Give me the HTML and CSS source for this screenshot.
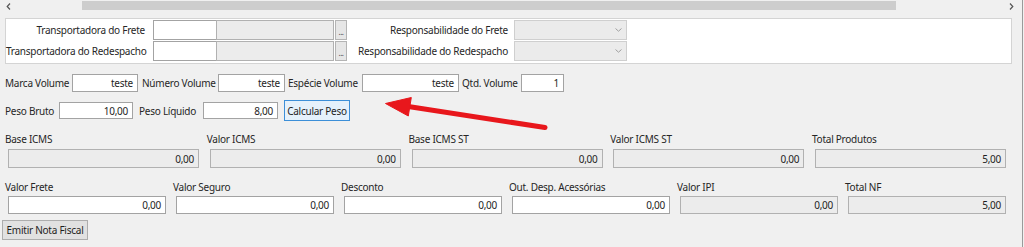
FILE: index.html
```html
<!DOCTYPE html>
<html lang="pt-BR">
<head>
<meta charset="utf-8">
<title>Nota Fiscal</title>
<link rel="stylesheet" href="styles.css">
</head>
<body>
<div class="frame">
  <div class="hscroll">
    <span class="sarrow"><svg width="5" height="7" viewBox="0 0 5 7"><path d="M4 0.5 L1.2 3.5 L4 6.5" fill="none" stroke="#555" stroke-width="1.2"/></svg></span>
    <div class="thumb"></div>
    <span class="sarrow right"><svg width="5" height="7" viewBox="0 0 5 7"><path d="M1 0.5 L3.8 3.5 L1 6.5" fill="none" stroke="#555" stroke-width="1.2"/></svg></span>
  </div>

  <div class="panel">
    <div class="prow">
      <span class="plabel">Transportadora do Frete</span>
      <span class="field code"></span>
      <span class="field ro name"></span>
      <span class="dots">...</span>
      <span class="plabel2">Responsabilidade do Frete</span>
      <span class="combo"><svg width="7" height="4" viewBox="0 0 7 4"><path d="M0.5 0.5 L3.5 3.2 L6.5 0.5" fill="none" stroke="#a0a0a0" stroke-width="1"/></svg></span>
    </div>
    <div class="prow">
      <span class="plabel">Transportadora do Redespacho</span>
      <span class="field code"></span>
      <span class="field ro name"></span>
      <span class="dots">...</span>
      <span class="plabel2">Responsabilidade do Redespacho</span>
      <span class="combo"><svg width="7" height="4" viewBox="0 0 7 4"><path d="M0.5 0.5 L3.5 3.2 L6.5 0.5" fill="none" stroke="#a0a0a0" stroke-width="1"/></svg></span>
    </div>
  </div>

  <div class="vrow">
    <span class="lbl l-marca">Marca Volume</span>
    <span class="field w-marca">teste</span>
    <span class="lbl l-numero">Número Volume</span>
    <span class="field w-numero">teste</span>
    <span class="lbl l-especie">Espécie Volume</span>
    <span class="field w-especie">teste</span>
    <span class="lbl l-qtd">Qtd. Volume</span>
    <span class="field w-qtd">1</span>
  </div>

  <div class="wrow">
    <span class="lbl l-bruto">Peso Bruto</span>
    <span class="field w-bruto">10,00</span>
    <span class="lbl l-liquido">Peso Líquido</span>
    <span class="field w-liquido">8,00</span>
    <span class="btn focus">Calcular Peso</span>
  </div>

  <div class="grid5">
    <div class="cell"><span class="clabel">Base ICMS</span><span class="field ro tall">0,00</span></div>
    <div class="cell"><span class="clabel">Valor ICMS</span><span class="field ro tall">0,00</span></div>
    <div class="cell"><span class="clabel">Base ICMS ST</span><span class="field ro tall">0,00</span></div>
    <div class="cell"><span class="clabel">Valor ICMS ST</span><span class="field ro tall">0,00</span></div>
    <div class="cell"><span class="clabel">Total Produtos</span><span class="field ro tall">5,00</span></div>
  </div>

  <div class="grid6">
    <div class="cell"><span class="clabel">Valor Frete</span><span class="field tall">0,00</span></div>
    <div class="cell"><span class="clabel">Valor Seguro</span><span class="field tall">0,00</span></div>
    <div class="cell"><span class="clabel">Desconto</span><span class="field tall">0,00</span></div>
    <div class="cell"><span class="clabel">Out. Desp. Acessórias</span><span class="field tall">0,00</span></div>
    <div class="cell"><span class="clabel">Valor IPI</span><span class="field ro tall">0,00</span></div>
    <div class="cell"><span class="clabel">Total NF</span><span class="field ro tall">5,00</span></div>
  </div>

  <div class="actions">
    <span class="btn emit">Emitir Nota Fiscal</span>
  </div>

  <svg class="arrow" width="1024" height="247" viewBox="0 0 1024 247">
    <line x1="405" y1="106" x2="545" y2="127.5" stroke="#e8171c" stroke-width="5" stroke-linecap="round"/>
    <polygon points="385.5,103.5 411.3,97.5 408.3,116" fill="#e8171c" stroke="#e8171c" stroke-width="1" stroke-linejoin="round"/>
  </svg>
</div>
</body>
</html>
```
FILE: styles.css
```css
* { box-sizing: border-box; }

body {
  margin: 0;
  background: #f0f0f0;
  font-family: "Segoe UI", "Noto Sans", sans-serif;
  font-size: 10px;
  letter-spacing: -0.25px;
  color: #262626;
}

.frame {
  position: relative;
  width: 1023px;
  height: 247px;
  border-right: 1px solid #9a9a9a;
  overflow: hidden;
}

/* horizontal scrollbar */
.hscroll {
  display: grid;
  grid-template-columns: 82px 814px 1fr;
  height: 12px;
}
.sarrow { display: flex; align-items: center; padding-left: 6px; padding-top: 1px; }
.sarrow.right { justify-content: flex-end; padding-right: 8px; padding-left: 0; }
.thumb { background: #cdcdcd; height: 9px; margin-top: 1px; }

/* top white panel */
.panel {
  margin: 6px 10px 0 5px;
  height: 46px;
  background: #fff;
  border: 1px solid #d4d4d4;
  padding: 1px 0 2px 0;
  display: flex;
  flex-direction: column;
  gap: 1px;
}
.prow { display: flex; align-items: center; height: 20px; }
.plabel { width: 139px; text-align: right; white-space: nowrap; }
.plabel2 { width: 161px; text-align: right; white-space: nowrap; margin-left: 0; }

.field {
  display: flex;
  align-items: center;
  justify-content: flex-end;
  padding-right: 4px;
  background: #fff;
  border: 1px solid #a3a3a3;
  color: #1e1e1e;
  height: 18px;
  white-space: nowrap;
}
.field.ro { background: #ececec; border-color: #b1b1b1; }

.field.code { width: 63px; height: 20px; margin-left: 8px; border-right: 0; }
.field.name { width: 118px; height: 20px; }
.dots {
  width: 12px;
  height: 20px;
  margin-left: 1px;
  background: #e6e6e6;
  border: 1px solid #b4b4b4;
  font-size: 8px;
  line-height: 22px;
  text-align: center;
  color: #444;
  letter-spacing: -0.5px;
}
.combo {
  width: 113px;
  height: 20px;
  margin-left: 6px;
  background: #ebebeb;
  border: 1px solid #cfcfcf;
  display: flex;
  align-items: center;
  justify-content: flex-end;
  padding-right: 4px;
}

/* volume row */
.vrow { display: flex; align-items: center; height: 18px; margin-top: 10px; padding-left: 5px; }
.lbl { white-space: nowrap; }
.l-marca { width: 67px; }
.w-marca { width: 66px; }
.l-numero { width: 80px; padding-left: 4px; }
.w-numero { width: 67px; }
.l-especie { width: 77px; padding-left: 3px; }
.w-especie { width: 97px; }
.l-qtd { width: 62px; padding-left: 3px; }
.w-qtd { width: 43px; }

/* weight row */
.wrow { display: flex; align-items: center; height: 21px; margin-top: 8px; padding-left: 5px; }
.wrow .field { height: 17px; }
.l-bruto { width: 54px; }
.w-bruto { width: 74px; }
.l-liquido { width: 70px; padding-left: 6px; }
.w-liquido { width: 75px; }

.btn {
  display: flex;
  align-items: center;
  justify-content: center;
  background: #e1e1e1;
  border: 1px solid #adadad;
  color: #1e1e1e;
  white-space: nowrap;
}
.btn.focus {
  width: 66px;
  height: 21px;
  margin-left: 6px;
  background: #e5f1fb;
  border-color: #3c8fd8;
}

/* totals grids */
.grid5 {
  display: grid;
  grid-template-columns: repeat(5, 191px);
  column-gap: 10.75px;
  margin-top: 11px;
  padding-left: 8px;
}
.grid6 {
  display: grid;
  grid-template-columns: repeat(6, 158px);
  column-gap: 10px;
  margin-top: 12px;
  padding-left: 8px;
}
.cell { display: flex; flex-direction: column; }
.clabel { height: 14px; line-height: 14px; margin-left: -3px; white-space: nowrap; }
.grid5 .clabel { margin-bottom: 3px; }
.grid6 .clabel { margin-bottom: 2px; }
.field.tall { height: 19px; }
.grid6 .field.tall { height: 18px; }

.actions { display: flex; margin-top: 6px; padding-left: 2px; }
.btn.emit { width: 86px; height: 20px; }

/* annotation arrow overlay */
.arrow { position: absolute; left: 0; top: 0; pointer-events: none; }
```
